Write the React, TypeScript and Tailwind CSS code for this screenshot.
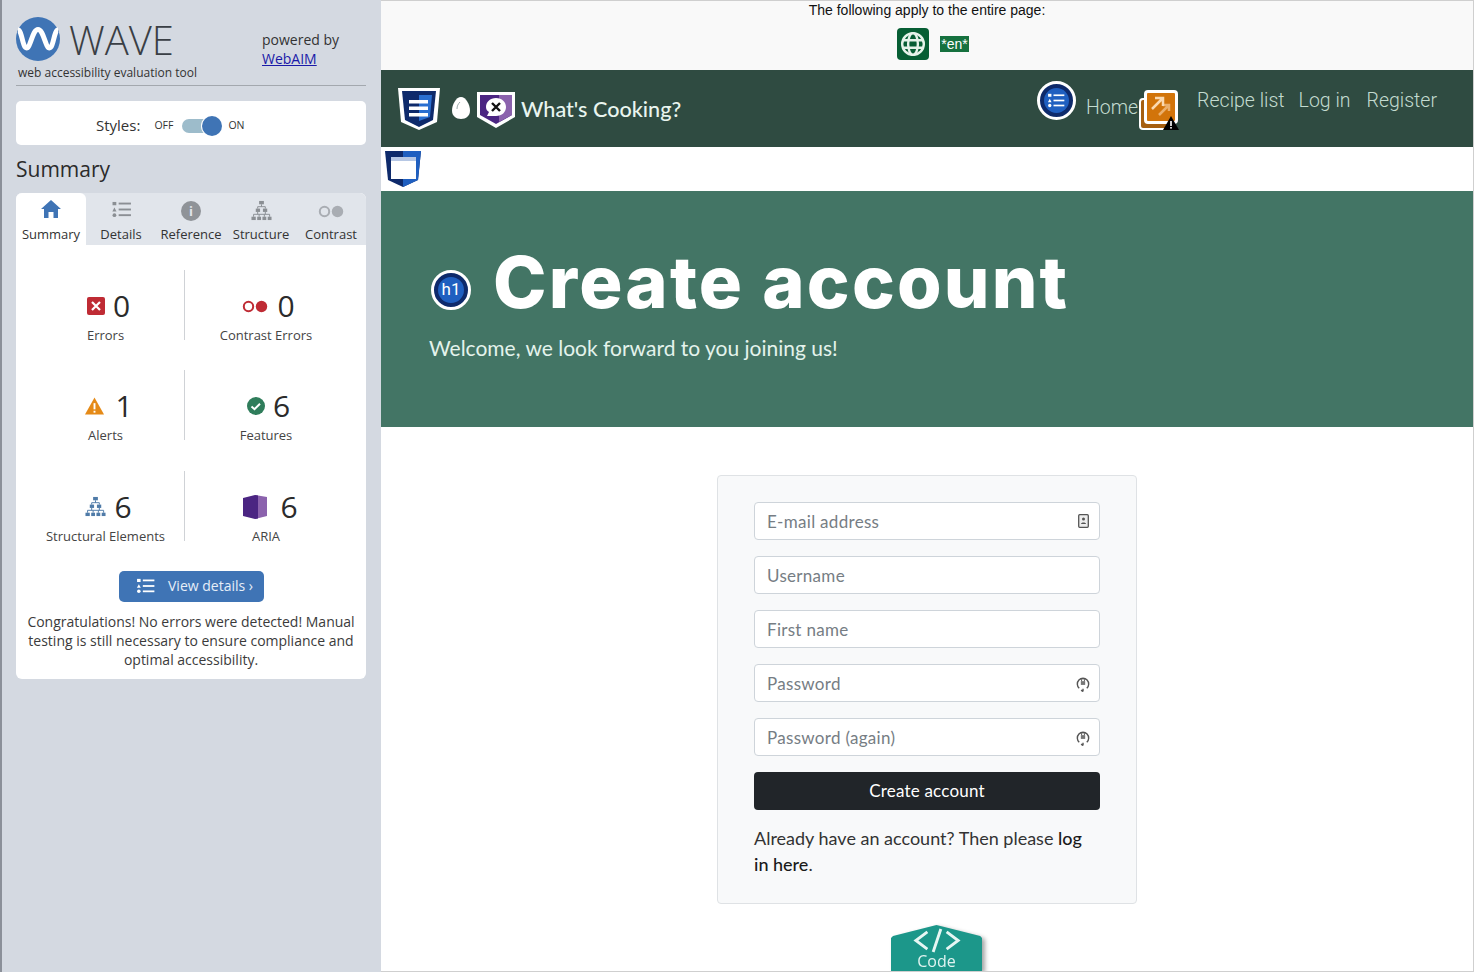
const sidebarFont = "font-['Open_Sans',sans-serif]";

function Shield({ className, children }: { className?: string; children?: React.ReactNode }) {
  return (
    <svg viewBox="0 0 44 44" className={className}>
      <path d="M1 1h42l-3 34-18 8-18-8z" fill="#fff" />
      <path d="M5 4h34l-3 29-14 7-14-7z" fill="#0e2a6b" />
      <path d="M22 8h13l-2 22-11 4z" fill="#2a6fd0" />
      {children}
    </svg>
  );
}

function CircleBadge({ className, children }: { className?: string; children?: React.ReactNode }) {
  return (
    <div className={`flex items-center justify-center rounded-full border-[3px] border-white bg-[#0e2a6b] ${className ?? ""}`}>
      <div className="flex h-[76%] w-[76%] items-center justify-center rounded-full bg-[#1f5fc0] text-white">{children}</div>
    </div>
  );
}

function TreeIcon({ color, className }: { color: string; className?: string }) {
  return (
    <svg viewBox="0 0 22 22" className={className} fill="none" stroke={color} strokeWidth="1">
      <g fill={color} stroke="none">
        <rect x="8.5" y="1" width="5" height="3.5" />
        <rect x="5" y="9" width="4.5" height="3.5" />
        <rect x="12.5" y="9" width="4.5" height="3.5" />
        <rect x="0.5" y="17.5" width="4.5" height="3.5" />
        <rect x="6.5" y="17.5" width="4" height="3.5" />
        <rect x="12" y="17.5" width="4" height="3.5" />
        <rect x="17.5" y="17.5" width="4" height="3.5" />
      </g>
      <path d="M11 4.500V7M7 9V7h8v2M7 12.500V15M15 12.500V15M2.700 17.500V15h16.800v2.500M8.500 15v2.500M14 15v2.500" />
    </svg>
  );
}

function ListIcon({ color, className }: { color: string; className?: string }) {
  return (
    <svg viewBox="0 0 20 18" className={className} fill={color}>
      <rect x="0.500" y="1" width="4" height="3.500" />
      <path d="M2.500 7l2.200 4h-4.400z" />
      <circle cx="2.500" cy="15" r="2" />
      <rect x="7" y="1.700" width="13" height="2" />
      <rect x="7" y="8" width="13" height="2" />
      <rect x="7" y="14" width="13" height="2" />
    </svg>
  );
}

function ContrastDots({ ring, solid, className }: { ring: string; solid: string; className?: string }) {
  return (
    <svg viewBox="0 0 26 13" className={className}>
      <circle cx="6.500" cy="6.500" r="4.700" fill="none" stroke={ring} strokeWidth="2" />
      <circle cx="19.500" cy="6.500" r="5.700" fill={solid} />
    </svg>
  );
}

// spacing holds the gap and left padding that place each icon and number pair
function Stat({ icon, value, label, spacing }: { icon: React.ReactNode; value: string; label: string; spacing: string }) {
  return (
    <div className="flex h-[70px] flex-col items-center">
      <div className={`mt-[18px] flex h-[36px] items-center justify-center ${spacing}`}>
        {icon}
        <span className="text-[30px] leading-[36px] text-[#2b2b2b]">{value}</span>
      </div>
      <span className="mt-[2px] text-[13px] leading-[18px] text-[#444]">{label}</span>
    </div>
  );
}

function Tab({ icon, label, active }: { icon: React.ReactNode; label: string; active?: boolean }) {
  return (
    <div className={`flex h-[52px] w-[70px] flex-col items-center rounded-t-[6px] ${active ? "bg-white" : ""}`}>
      <div className="flex h-[34px] items-center justify-center">{icon}</div>
      <span className="text-[13px] leading-[15px] text-[#333]">{label}</span>
    </div>
  );
}

function Sidebar() {
  return (
    <aside className={`flex w-[381px] shrink-0 flex-col border-l-[2px] border-[#8b9099] bg-[#d4d9e1] pl-[14px] pr-[15px] ${sidebarFont}`}>
      <div className="relative h-[86px] border-b border-[#a3a8ae]">
        <svg viewBox="0 0 44 44" className="absolute left-0 top-[17px] h-[44px] w-[44px]">
          <circle cx="22" cy="22" r="22" fill="#3f74b5" />
          <path d="M2 13C6 13 6.500 31 10.500 31C14.500 31 16.500 12.500 22 12.500C27.500 12.500 29.500 31 33.500 31C37.500 31 38 13 42 13" fill="none" stroke="#fff" strokeWidth="5" />
        </svg>
        <span className="absolute left-[53px] top-[15px] text-[40px] font-light leading-[50px] text-[#3a3f45]">WAVE</span>
        <span className="absolute left-[2px] top-[65px] text-[12px] leading-[16px] text-[#333]">web accessibility evaluation tool</span>
        <div className="absolute left-[246px] top-[30px] text-[14px] leading-[19px] text-[#333]">
          <div>powered by</div>
          <a href="#" className="text-[#1a1aa8] underline">WebAIM</a>
        </div>
      </div>

      <div className="mt-[15px] flex h-[44px] items-center rounded-[5px] bg-white pl-[80px] pt-[5px]">
        <span className="text-[15px] text-[#333]">Styles:</span>
        <span className="ml-[14px] text-[10.500px] text-[#333]">OFF</span>
        <div className="relative ml-[9px] h-[14px] w-[37px] rounded-full bg-[#9dbccb]">
          <div className="absolute right-[-3px] top-[-3px] h-[20px] w-[20px] rounded-full bg-[#3f74b5] shadow-[0_0_0_1px_#fff]" />
        </div>
        <span className="ml-[9px] text-[10.500px] text-[#333]">ON</span>
      </div>

      <h2 className="mt-[9px] h-[39px] text-[21px] leading-[30px] text-[#2b2b2b]">Summary</h2>

      <div className="h-[486px] rounded-[6px] bg-white">
        <div className="flex rounded-t-[6px] bg-[#e1e5eb]">
          <Tab active label="Summary" icon={
            <svg viewBox="0 0 20 18" className="mb-[2px] h-[18px] w-[20px]" fill="#3f74b5"><path d="M10 0l10 9h-3v9h-4.500v-6h-5v6H3V9H0z" /></svg>
          } />
          <Tab label="Details" icon={<ListIcon color="#8b8f94" className="mb-[2px] h-[17px] w-[19px]" />} />
          <Tab label="Reference" icon={
            <div className="mt-[2px] flex h-[20px] w-[20px] items-center justify-center rounded-full bg-[#8f9398] text-[13px] font-bold leading-none text-[#e1e5eb]">i</div>
          } />
          <Tab label="Structure" icon={<TreeIcon color="#8b8f94" className="h-[21px] w-[21px]" />} />
          <Tab label="Contrast" icon={<ContrastDots ring="#a9adb3" solid="#a9adb3" className="mt-[2px] h-[13px] w-[26px]" />} />
        </div>

        <div className="mt-[25px] grid grid-cols-[157px_2px_160px] gap-y-[30.400px] pl-[11px]">
          <Stat spacing="gap-[8px] pl-[6px]" value="0" label="Errors" icon={
            <svg viewBox="0 0 18 18" className="h-[18px] w-[18px]"><rect width="18" height="18" rx="2" fill="#bf2b34" /><path d="M5 5l8 8M13 5l-8 8" stroke="#fff" strokeWidth="2.200" /></svg>
          } />
          <div className="w-px bg-[#cfd2d6]" />
          <Stat spacing="gap-[9px] pl-[5px]" value="0" label="Contrast Errors" icon={<ContrastDots ring="#bf2b34" solid="#bf2b34" className="h-[13px] w-[26px]" />} />

          <Stat spacing="gap-[11px] pl-[7px]" value="1" label="Alerts" icon={
            <svg viewBox="0 0 20 18" className="h-[18px] w-[19px]"><path d="M10 0l10 18H0z" fill="#e58a17" /><rect x="9" y="6" width="2" height="6.500" fill="#fff" /><rect x="9" y="14" width="2" height="2" fill="#fff" /></svg>
          } />
          <div className="w-px bg-[#cfd2d6]" />
          <Stat spacing="gap-[8px] pl-[5px]" value="6" label="Features" icon={
            <svg viewBox="0 0 18 18" className="h-[18px] w-[18px]"><circle cx="9" cy="9" r="9" fill="#2f7d5b" /><path d="M4.500 9.500l3 2.700 5.500-5.400" fill="none" stroke="#fff" strokeWidth="2" /></svg>
          } />

          <Stat spacing="gap-[8px] pl-[6px]" value="6" label="Structural Elements" icon={<TreeIcon color="#4f7ba8" className="h-[21px] w-[21px]" />} />
          <div className="w-px bg-[#cfd2d6]" />
          <Stat spacing="gap-[13px] pl-[9px]" value="6" label="ARIA" icon={
            <svg viewBox="0 0 24 24" className="h-[24px] w-[24px]"><path d="M0 3l12-3v24L0 21z" fill="#4b2582" /><path d="M12 0l12 2v19l-12 3z" fill="#8b62ad" /><path d="M12 0l3 .5v23l-3 .5z" fill="#4b2582" /></svg>
          } />
        </div>

        <a href="#" className="ml-[103px] mt-[30px] flex h-[31px] w-[145px] items-center rounded-[5px] bg-[#3f74b5] pl-[17px] text-[14px] text-[#e6eef8]">
          <ListIcon color="#fff" className="h-[16px] w-[19px]" />
          <span className="mb-[2px] ml-[13px]">View details ›</span>
        </a>

        <p className="mt-[10px] px-[8px] text-center text-[14px] leading-[19px] text-[#3b3b3b]">
          Congratulations! No errors were detected! Manual testing is still necessary to ensure compliance and optimal accessibility.
        </p>
      </div>
    </aside>
  );
}

function NavBar() {
  return (
    <nav className="flex h-[77px] items-start bg-[#2f4b41] pl-[16px] pr-[36px] font-['Roboto',sans-serif]">
      <Shield className="mt-[17px] h-[44px] w-[44px] shrink-0">
        <g fill="#fff"><rect x="12" y="13" width="19" height="3.500" /><rect x="12" y="19.500" width="19" height="3.500" /><rect x="12" y="26" width="19" height="3.500" /></g>
      </Shield>
      <svg viewBox="0 0 18 22" className="ml-[11px] mt-[27px] h-[22px] w-[18px] shrink-0">
        <path d="M9 0c5 0 9 8 9 13.500S14 22 9 22s-9-3-9-8.500S4 0 9 0z" fill="#fff" />
        <path d="M5 12c0-3 1-5 3-7" fill="none" stroke="#9aa" strokeWidth="1" />
      </svg>
      <svg viewBox="0 0 38 38" className="ml-[7px] mt-[20px] h-[38px] w-[38px] shrink-0">
        <path d="M0 2h38v25l-19 11L0 27z" fill="#fff" />
        <path d="M3 5h32v20l-16 9-16-9z" fill="#4b2582" />
        <path d="M22 5h13v20l-13 7z" fill="#8b62ad" />
        <path d="M19 8c6 0 10 4 10 9s-4 9-10 9h-9l2-4c-2-1-3-3-3-5 0-5 4-9 10-9z" fill="#fff" />
        <path d="M15 13l8 8M23 13l-8 8" stroke="#111" strokeWidth="2.400" />
      </svg>
      <span className="ml-[6px] mt-[25px] whitespace-nowrap font-['Lato',sans-serif] text-[21.600px] font-medium leading-[28px] text-[#e9f5ef]">What's Cooking?</span>

      <div className="ml-auto flex items-start text-[19.500px] font-light text-[#c3dbd0]">
        <CircleBadge className="mt-[11px] h-[39px] w-[39px]">
          <ListIcon color="#fff" className="h-[15px] w-[18px]" />
        </CircleBadge>
        <a href="#" className="ml-[10px] mt-[26px] leading-[24px]">Home</a>
        <div className="relative ml-[1px] mt-[20px] h-[40px] w-[40px]">
          <div className="absolute bottom-0 left-0 h-[32px] w-[32px] rounded-[4px] border-[2px] border-white bg-[#a65f10]" />
          <div className="absolute right-[1px] top-0 flex h-[34px] w-[34px] items-center justify-center rounded-[4px] border-[3px] border-white bg-[#d2740a]">
            <svg viewBox="0 0 24 24" className="h-[24px] w-[24px]" fill="none" stroke="#fbd9b0" strokeWidth="2.500"><path d="M3 14L14 3M6 3h8v8" /><path d="M10 20l10-10M14 10h6v6" opacity="0.600" /></svg>
          </div>
          <svg viewBox="0 0 16 14" className="absolute bottom-0 right-0 h-[14px] w-[16px]"><path d="M8 0l8 14H0z" fill="#000" /><rect x="7.200" y="5" width="1.600" height="5" fill="#fff" /><rect x="7.200" y="11" width="1.600" height="1.600" fill="#fff" /></svg>
        </div>
        <a href="#" className="ml-[18px] mt-[19px] leading-[24px]">Recipe list</a>
        <a href="#" className="ml-[14px] mt-[19px] leading-[24px]">Log in</a>
        <a href="#" className="ml-[16px] mt-[19px] leading-[24px]">Register</a>
      </div>
    </nav>
  );
}

function KeyIcon() {
  return (
    <svg viewBox="0 0 14 18" className="absolute right-[10px] top-[11px] h-[17px] w-[14px]" fill="none" stroke="#555" strokeWidth="1.500">
      <path d="M3 14a6 6 0 1 1 8 0" />
      <rect x="4.700" y="6.500" width="4.600" height="4" fill="#777" stroke="none" />
      <path d="M5.500 6.500V5.200a1.500 1.500 0 0 1 3 0v1.300" strokeWidth="1" />
      <path d="M7 14.500v3M5 16l2 1.500" />
    </svg>
  );
}

function Field({ placeholder, type, icon }: { placeholder: string; type?: string; icon?: React.ReactNode }) {
  return (
    <div className="relative h-[38px]">
      <input
        type={type ?? "text"}
        placeholder={placeholder}
        className="h-full w-full rounded-[4px] border border-[#ced4da] bg-white px-[12px] text-[17px] tracking-[0.300px] text-[#333] placeholder:text-[#767d84]"
      />
      {icon}
    </div>
  );
}

function Main() {
  return (
    <main className="relative mr-[1px] flex min-w-0 flex-1 flex-col overflow-hidden border-b border-r border-t border-[#cfcfcf] bg-white font-['Lato',sans-serif]">
      <div className="flex h-[69px] flex-col items-center bg-[#f9f9f9] font-['Liberation_Sans',sans-serif]">
        <p className="text-[14px] leading-[19px] text-[#111]">The following apply to the entire page:</p>
        <div className="mt-[8px] flex items-center pb-[2px] pl-[12px]">
          <div className="flex h-[32px] w-[32px] items-center justify-center rounded-[4px] bg-[#075e34]">
            <svg viewBox="0 0 24 24" className="h-[26px] w-[26px]" fill="none" stroke="#e6f3ea" strokeWidth="2.200">
              <circle cx="12" cy="12" r="10" />
              <ellipse cx="12" cy="12" rx="4.500" ry="10" />
              <path d="M3 8.500h18M3 15.500h18" />
            </svg>
          </div>
          <span className="ml-[11px] bg-[#16713f] px-px text-[14px] leading-[16px] text-white">*en*</span>
        </div>
      </div>

      <NavBar />

      <div className="h-[44px] pl-[4px] pt-[4px]">
        <svg viewBox="0 0 36 36" className="h-[36px] w-[36px]">
          <path d="M0 0h36l-3 29-15 7-15-7z" fill="#0e2a6b" />
          <path d="M18 0h18l-3 29-15 7z" fill="#1f5fc0" />
          <rect x="6" y="6" width="25" height="22" fill="#fff" />
          <rect x="6" y="6" width="25" height="4" fill="#b6c7e4" />
        </svg>
      </div>

      <section className="relative h-[236px] bg-[#437565] pl-[48px]">
        <div className="absolute left-[50px] top-[79px]">
          <CircleBadge className="h-[40px] w-[40px]">
            <span className="font-['Roboto',sans-serif] text-[17px] leading-none">h1</span>
          </CircleBadge>
        </div>
        <h1 className="ml-[64px] mt-[47px] whitespace-nowrap font-['Inter',sans-serif] text-[72px] font-extrabold leading-[88px] tracking-[2.200px] text-white">Create account</h1>
        <p className="mt-[7px] text-[21px] leading-[30px] text-[#e4f3ec]">Welcome, we look forward to you joining us!</p>
      </section>

      <div className="mx-auto mt-[48px] flex h-[429px] w-[420px] flex-col gap-[16px] rounded-[4px] border border-[#dfe2e5] bg-[#f8f9fa] px-[36px] pt-[26px]">
        <Field placeholder="E-mail address" icon={
          <svg viewBox="0 0 11 14" className="absolute right-[11px] top-[12px] h-[14px] w-[11px]"><rect x="0.700" y="0.700" width="9.600" height="12.600" rx="1" fill="#eee" stroke="#555" strokeWidth="1.300" /><circle cx="5.500" cy="5" r="1.500" fill="#555" /><path d="M3 10c0-2 5-2 5 0z" fill="#555" /></svg>
        } />
        <Field placeholder="Username" />
        <Field placeholder="First name" />
        <Field placeholder="Password" type="password" icon={<KeyIcon />} />
        <Field placeholder="Password (again)" type="password" icon={<KeyIcon />} />
        <button className="h-[38px] rounded-[4px] bg-[#212529] text-[17px] tracking-[0.200px] text-white">Create account</button>
        <p className="mt-[-1px] text-[18px] leading-[26px] text-[#333]">
          Already have an account? Then please <a href="#" className="font-medium text-[#1a1a1a]">log in here</a>.
        </p>
      </div>

      <div className="absolute bottom-0 left-[510px] drop-shadow-[3px_2px_2px_rgba(0,0,0,0.350)]">
        <div className="flex h-[46px] w-[91px] flex-col items-center rounded-t-[8px] bg-[#1c978a] text-[#dff3f0] [clip-path:polygon(0_13px,2px_11px,50%_0,98%_11px,100%_13px,100%_100%,0_100%)]">
          <svg viewBox="0 0 50 26" className="mt-[3px] h-[25px] w-[54px] shrink-0" fill="none" stroke="#e6f6f3" strokeWidth="3">
            <path d="M15 4L3 13l12 9M35 4l12 9-12 9M29 1L21 25" />
          </svg>
          <span className={`mt-[-2px] text-[16px] leading-[20px] ${sidebarFont}`}>Code</span>
        </div>
      </div>
    </main>
  );
}

export default function App() {
  return (
    <div className="flex h-[972px] w-[1475px] overflow-hidden bg-white">
      <Sidebar />
      <Main />
    </div>
  );
}
